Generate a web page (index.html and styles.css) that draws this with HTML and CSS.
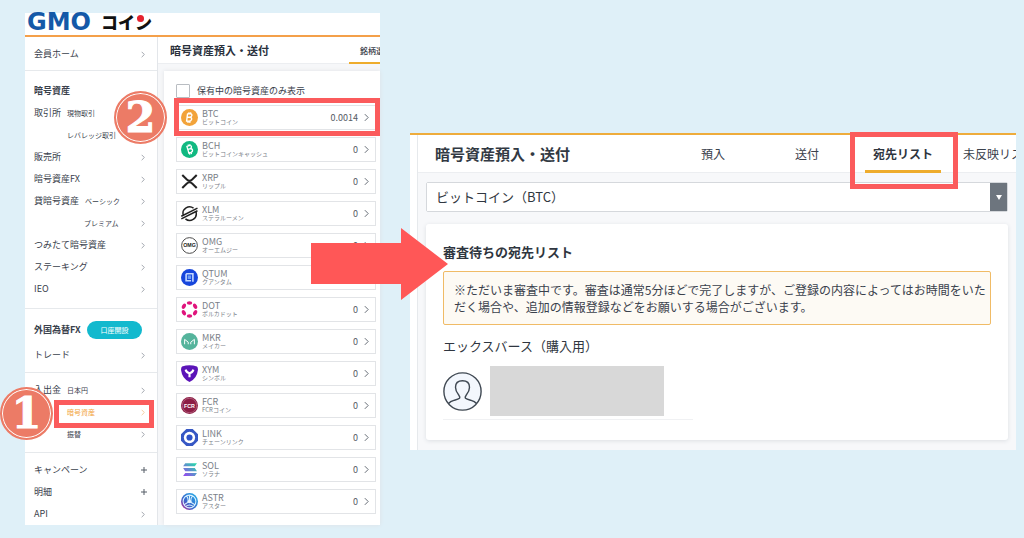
FILE: index.html
```html
<!DOCTYPE html>
<html lang="ja">
<head>
<meta charset="utf-8">
<meta name="viewport" content="width=device-width, initial-scale=1">
<title>GMOコイン 暗号資産預入・送付</title>
<link rel="stylesheet" href="styles.css">
</head>
<body>
<svg class="defs" aria-hidden="true">
  <symbol id="chev" viewBox="0 0 6 10"><path d="M1 1l4 4-4 4" fill="none" stroke="currentColor" stroke-width="1.2"/></symbol>
  <symbol id="plus" viewBox="0 0 8 8"><path d="M4 1v6M1 4h6" fill="none" stroke="currentColor" stroke-width="1"/></symbol>
</svg>
<main class="stage">
  <section class="shot">
    <header class="brand">
      <span class="brand-gmo">GMO</span><span class="brand-coin">コイン<i class="brand-dot"></i></span>
    </header>
    <div class="split">
      <nav class="side" aria-label="メニュー">
        <div class="group group-home">
          <a class="item" href="#">会員ホーム<svg class="chev"><use href="#chev"/></svg></a>
        </div>
        <div class="group group-crypto">
          <h2 class="side-title">暗号資産</h2>
          <a class="item" href="#">取引所<span class="sub">現物取引</span><svg class="chev"><use href="#chev"/></svg></a>
          <a class="item" href="#"><span class="sub indent-a">レバレッジ取引</span><svg class="chev"><use href="#chev"/></svg></a>
          <a class="item" href="#">販売所<svg class="chev"><use href="#chev"/></svg></a>
          <a class="item" href="#">暗号資産FX<svg class="chev"><use href="#chev"/></svg></a>
          <a class="item" href="#">貸暗号資産<span class="sub">ベーシック</span><svg class="chev"><use href="#chev"/></svg></a>
          <a class="item" href="#"><span class="sub indent-b">プレミアム</span><svg class="chev"><use href="#chev"/></svg></a>
          <a class="item" href="#">つみたて暗号資産<svg class="chev"><use href="#chev"/></svg></a>
          <a class="item" href="#">ステーキング<svg class="chev"><use href="#chev"/></svg></a>
          <a class="item" href="#">IEO<svg class="chev"><use href="#chev"/></svg></a>
        </div>
        <div class="group group-fx">
          <h2 class="side-title">外国為替FX<button class="open-account" type="button">口座開設</button></h2>
          <a class="item" href="#">トレード<svg class="chev"><use href="#chev"/></svg></a>
        </div>
        <div class="group group-cash">
          <a class="item" href="#">入出金<span class="sub">日本円</span><svg class="chev"><use href="#chev"/></svg></a>
          <a class="item current" href="#"><span class="sub indent-a">暗号資産</span><svg class="chev"><use href="#chev"/></svg>
            <span class="frame frame-side"></span><span class="badge badge-one">1</span></a>
          <a class="item" href="#"><span class="sub indent-a">振替</span><svg class="chev"><use href="#chev"/></svg></a>
        </div>
        <div class="group group-more">
          <a class="item" href="#">キャンペーン<svg class="plus"><use href="#plus"/></svg></a>
          <a class="item" href="#">明細<svg class="plus"><use href="#plus"/></svg></a>
          <a class="item" href="#">API<svg class="chev"><use href="#chev"/></svg></a>
        </div>
      </nav>
      <div class="content">
        <div class="content-head">
          <h1 class="content-title">暗号資産預入・送付</h1>
          <a class="pick-tab" href="#">銘柄選択</a>
        </div>
        <div class="coins-card">
          <label class="filter"><input class="filter-box" type="checkbox">保有中の暗号資産のみ表示</label>
          <ul class="coins">
            <li class="coin">
              <svg class="coin-icon" viewBox="0 0 16 16"><circle cx="8" cy="8" r="8" fill="#f2a33a"/><path d="M6.2 4.4l-.9 7M6.200 4.500h2.500q1.900.2 1.500 1.800-.3 1.500-2.200 1.500h-2M8 7.800q2.300.1 2 1.900-.4 1.700-2.600 1.700h-2.800M7.500 3v1.500M9.200 3.200l-.2 1.500M6.700 11.400l-.2 1.600M8.400 11.400l-.2 1.600" fill="none" stroke="#fff" stroke-width="1.300"/></svg>
              <span class="coin-name">BTC<small>ビットコイン</small></span><span class="coin-qty">0.0014</span><svg class="coin-chev"><use href="#chev"/></svg>
              <span class="frame frame-coin"></span><span class="badge badge-two">2</span>
            </li>
            <li class="coin">
              <svg class="coin-icon" viewBox="0 0 16 16"><circle cx="8" cy="8" r="8" fill="#11b981"/><path d="M5.500 4.900l2 6.600M5 5.200l2.800-.8q1.900-.3 2.100 1 .2 1.500-1.600 2l-1.700.5M8.300 7.400q2-.4 2.500.9.500 1.700-1.500 2.400l-2.700.8M6.600 3.300l.4 1.400M8.200 2.900l.4 1.400M7.900 11.300l.4 1.500M9.500 10.800l.4 1.500" fill="none" stroke="#fff" stroke-width="1.200"/></svg>
              <span class="coin-name">BCH<small>ビットコインキャッシュ</small></span><span class="coin-qty">0</span><svg class="coin-chev"><use href="#chev"/></svg>
            </li>
            <li class="coin">
              <svg class="coin-icon" viewBox="0 0 16 16"><path d="M1.200 1.800l4.300 4.300q2.500 2.300 5 0l4.300-4.300M1.200 14.200l4.300-4.300q2.500-2.300 5 0l4.300 4.300" fill="none" stroke="#222" stroke-width="1.900"/></svg>
              <span class="coin-name">XRP<small>リップル</small></span><span class="coin-qty">0</span><svg class="coin-chev"><use href="#chev"/></svg>
            </li>
            <li class="coin">
              <svg class="coin-icon" viewBox="0 0 16 16"><path d="M2 9.200A6.200 6.200 0 0 1 11.800 3M14.200 6.800A6.200 6.200 0 0 1 4.200 13M.3 10.600L15.500 2.900M.3 13.100L15.500 5.400" fill="none" stroke="#222" stroke-width="1.400"/></svg>
              <span class="coin-name">XLM<small>ステラルーメン</small></span><span class="coin-qty">0</span><svg class="coin-chev"><use href="#chev"/></svg>
            </li>
            <li class="coin">
              <svg class="coin-icon" viewBox="0 0 16 16"><circle cx="8" cy="8" r="7.400" fill="#fff" stroke="#444" stroke-width=".9"/><text class="icon-text" x="8" y="9.600" text-anchor="middle" fill="#222">OMG</text></svg>
              <span class="coin-name">OMG<small>オーエムジー</small></span><span class="coin-qty">0</span><svg class="coin-chev"><use href="#chev"/></svg>
            </li>
            <li class="coin">
              <svg class="coin-icon" viewBox="0 0 16 16"><circle cx="8" cy="8" r="8" fill="#1746dc"/><path d="M4.800 4.500h6.400v7.500M9.500 11H4.800V4.500" fill="none" stroke="#c4d8ff" stroke-width="1.500"/><path d="M6.300 6h3.200v3.400H6.300z" fill="#6d9df5"/></svg>
              <span class="coin-name">QTUM<small>クアンタム</small></span><span class="coin-qty">0</span><svg class="coin-chev"><use href="#chev"/></svg>
            </li>
            <li class="coin">
              <svg class="coin-icon" viewBox="0 0 16 16"><g fill="#e0147c"><ellipse cx="8" cy="1.900" rx="2.600" ry="1.700"/><ellipse cx="8" cy="14.100" rx="2.600" ry="1.700"/><ellipse cx="8" cy="1.900" rx="2.600" ry="1.700" transform="rotate(60 8 8)"/><ellipse cx="8" cy="1.900" rx="2.600" ry="1.700" transform="rotate(120 8 8)"/><ellipse cx="8" cy="1.900" rx="2.600" ry="1.700" transform="rotate(240 8 8)"/><ellipse cx="8" cy="1.900" rx="2.600" ry="1.700" transform="rotate(300 8 8)"/></g></svg>
              <span class="coin-name">DOT<small>ポルカドット</small></span><span class="coin-qty">0</span><svg class="coin-chev"><use href="#chev"/></svg>
            </li>
            <li class="coin">
              <svg class="coin-icon" viewBox="0 0 16 16"><circle cx="8" cy="8" r="8" fill="#55b49c"/><path d="M3.400 10.600V6l3.400 2.600v2M12.600 10.600V6L9.200 8.600v2" fill="none" stroke="#fff" stroke-width=".9"/></svg>
              <span class="coin-name">MKR<small>メイカー</small></span><span class="coin-qty">0</span><svg class="coin-chev"><use href="#chev"/></svg>
            </li>
            <li class="coin">
              <svg class="coin-icon" viewBox="0 0 16 16"><path d="M1 1.500Q8-1.200 15 1.500q1 1 1 3-1 8.500-8 11.500Q1 13 0 4.500q0-2 1-3z" fill="#5b14b8"/><path d="M4.300 4.300q1 3 3.700 3.400 2.700-.4 3.700-3.400M8 7.500v4" fill="none" stroke="#fff" stroke-width="2"/></svg>
              <span class="coin-name">XYM<small>シンボル</small></span><span class="coin-qty">0</span><svg class="coin-chev"><use href="#chev"/></svg>
            </li>
            <li class="coin">
              <svg class="coin-icon" viewBox="0 0 16 16"><circle cx="8" cy="8" r="8" fill="#8c1d45"/><circle cx="8" cy="8" r="6.800" fill="none" stroke="#c98ba2" stroke-width=".5"/><text class="icon-text" x="8" y="10" text-anchor="middle" fill="#fff">FCR</text></svg>
              <span class="coin-name">FCR<small>FCRコイン</small></span><span class="coin-qty">0</span><svg class="coin-chev"><use href="#chev"/></svg>
            </li>
            <li class="coin">
              <svg class="coin-icon" viewBox="0 0 16 16"><path d="M5 0h6l5 5v6l-5 5H5l-5-5V5z" fill="#3657c4"/><circle cx="8" cy="8" r="5.300" fill="#fff"/><circle cx="8" cy="8" r="2.900" fill="#2f52c8"/></svg>
              <span class="coin-name">LINK<small>チェーンリンク</small></span><span class="coin-qty">0</span><svg class="coin-chev"><use href="#chev"/></svg>
            </li>
            <li class="coin">
              <svg class="coin-icon" viewBox="0 0 16 16"><defs><linearGradient id="sol" x1="0" y1="1" x2="1" y2="0"><stop offset="0" stop-color="#9b3ff2"/><stop offset="1" stop-color="#1fe3a6"/></linearGradient></defs><path d="M4 2h11l-2 3H2zM2 6.600h11l2 3H4zM4 11.200h11l-2 3H2z" fill="url(#sol)"/></svg>
              <span class="coin-name">SOL<small>ソラナ</small></span><span class="coin-qty">0</span><svg class="coin-chev"><use href="#chev"/></svg>
            </li>
            <li class="coin">
              <svg class="coin-icon" viewBox="0 0 16 16"><defs><linearGradient id="astr" x1="0" y1="1" x2="1" y2="0"><stop offset="0" stop-color="#d0268f"/><stop offset=".4" stop-color="#3a66cc"/><stop offset="1" stop-color="#22b7ea"/></linearGradient></defs><circle cx="8" cy="8" r="8" fill="url(#astr)"/><g fill="none" stroke="#d9f1ff" stroke-width="1"><circle cx="8" cy="8" r="6"/><path d="M8 2v6l-5.200 3M8 8l5.200 3M5 3q2.500 2 1.300 6M11 3q-2.500 2-1.300 6M4.500 12.600q3.500-2.600 7 0"/></g><circle cx="8" cy="8" r="1.600" fill="#e8f6ff"/></svg>
              <span class="coin-name">ASTR<small>アスター</small></span><span class="coin-qty">0</span><svg class="coin-chev"><use href="#chev"/></svg>
            </li>
          </ul>
        </div>
      </div>
    </div>
  </section>

  <section class="shot shot-dest">
    <div class="gutter"></div>
    <div class="dest">
      <header class="dest-head">
        <h2 class="dest-title">暗号資産預入・送付</h2>
        <nav class="tabs" aria-label="預入・送付">
          <a class="tab" href="#">預入</a>
          <a class="tab" href="#">送付</a>
          <a class="tab tab-active" href="#">宛先リスト<span class="frame frame-tab"></span></a>
          <span class="tab-clip"><a class="tab-last" href="#">未反映リスト</a></span>
        </nav>
      </header>
      <div class="dest-body">
        <div class="picker">
          <select class="picker-select" aria-label="銘柄"><option>ビットコイン（BTC）</option></select>
          <span class="picker-arrow"><svg viewBox="0 0 6 5"><path d="M0 0h6L3 5z" fill="#fff"/></svg></span>
        </div>
        <div class="card">
          <h3 class="card-title">審査待ちの宛先リスト</h3>
          <p class="notice">※ただいま審査中です。審査は通常5分ほどで完了しますが、ご登録の内容によってはお時間をいただく場合や、追加の情報登録などをお願いする場合がございます。</p>
          <p class="dest-name">エックスバース（購入用）</p>
          <div class="person">
            <svg class="avatar" viewBox="0 0 39 39"><circle cx="19.500" cy="19.500" r="18.600" fill="#f3f7fd" stroke="#3f4852" stroke-width="1.400"/><path d="M5.500 31.500q1.500-2 6-3.300 4-1 5-1.900.8-1.300-.8-3.300-3.200-3.800-3.200-7.800 0-6.500 7-6.500t7 6.500q0 4-3.200 7.800-1.600 2-.8 3.300 1 .9 5 1.900 4.500 1.300 6 3.300" fill="none" stroke="#3f4852" stroke-width="1.400"/></svg>
            <div class="mask"></div>
          </div>
        </div>
      </div>
    </div>
    <svg class="arrow" viewBox="0 0 137 72" aria-hidden="true"><path d="M0 15h90V0l47 36-47 36V56H0z" fill="#ff5757"/></svg>
  </section>
</main>
</body>
</html>
```
FILE: styles.css
```css
* { box-sizing: border-box; }
body {
  margin: 0;
  background: #dff0f8;
  color: #3a414c;
  font-family: "Noto Sans CJK JP", sans-serif;
  font-size: 9px;
}
h1, h2, h3, p, ul { margin: 0; padding: 0; }
a { color: inherit; text-decoration: none; }
.defs { position: absolute; width: 0; height: 0; }

.stage {
  display: grid;
  grid-template-columns: 355fr 606fr;
  gap: 30px;
  align-items: start;
  padding: 13px 8px 13px 25px;
}
.shot { position: relative; background: #fff; min-width: 0; }

/* Brand bar */
.brand {
  display: flex;
  align-items: flex-start;
  gap: 10px;
  height: 24px;
  padding-left: 2px;
  border-bottom: 2px solid #f4a04a;
}
.brand-gmo { color: #1459a8; font: bold 24px/18px "DejaVu Sans", sans-serif; }
.brand-coin { position: relative; color: #111; font-size: 17px; font-weight: 900; line-height: 18px; }
.brand-dot {
  position: absolute; left: 36px; top: 2px;
  width: 7px; height: 7px; border-radius: 50%; background: #e6222e;
}

/* Side menu */
.split { display: flex; }
.side { flex: 0 0 133px; border-right: 1px solid #e3e6ea; }
.group { border-bottom: 1px solid #e6e9ec; padding-left: 9px; padding-right: 12px; }
.group-home { padding-top: 6px; padding-bottom: 5px; }
.group-crypto { padding-top: 8px; padding-bottom: 8px; }
.group-fx { padding-top: 9px; padding-bottom: 6px; }
.group-fx .side-title { margin-bottom: 3px; }
.group-cash { padding-top: 6px; padding-bottom: 7px; }
.group-more { padding-top: 6px; border-bottom: 0; }
.side-title { display: flex; align-items: center; justify-content: space-between; height: 23px; font-size: 9px; font-weight: 700; line-height: 12px; }
.item { position: relative; display: flex; align-items: center; height: 22px; line-height: 12px; }
.sub { margin-left: 6px; font-size: 7px; }
.indent-a { margin-left: 33px; }
.indent-b { margin-left: 50px; }
.chev { width: 4px; height: 7px; margin-left: auto; color: #8b929b; }
.plus { width: 8px; height: 8px; margin-left: auto; margin-right: -3px; color: #555c66; }
.current { color: #f2a33a; }
.current .chev { color: #f2c48a; }
.open-account {
  width: 55px; height: 18px; margin-right: 3px; padding: 0;
  border: 0; border-radius: 9px; background: #12b9ce; color: #fff;
  font: 400 7px/18px "Noto Sans CJK JP", sans-serif;
}

/* Coin list */
.content { flex: 1; min-width: 0; display: flex; flex-direction: column; background: #f6f7f9; }
.content-head {
  display: flex; justify-content: space-between;
  height: 27px; padding-left: 12px;
  background: #fff; border-bottom: 1px solid #eceef1;
}
.content-title { color: #2a313c; font-size: 11px; font-weight: 700; line-height: 27px; white-space: nowrap; }
.pick-tab {
  width: 31px; height: 27px; padding-left: 11px; overflow: hidden;
  border-bottom: 2px solid #eeac2c;
  font-size: 8px; font-weight: 500; line-height: 27px; white-space: nowrap;
}
.coins-card {
  flex: 1; margin: 7px 0 0 6px; padding: 12px 4px 10px 12px;
  background: #fff; box-shadow: 0 0 4px #dfe2e6;
}
.filter { display: flex; align-items: center; gap: 7px; height: 16px; margin-bottom: 6px; line-height: 16px; }
.filter-box {
  appearance: none; width: 14px; height: 14px; margin: 0;
  border: 1px solid #b9bdc2; border-radius: 1px; background: #fff;
}
.coins { display: grid; gap: 7px; list-style: none; }
.coin {
  position: relative; display: flex; align-items: center;
  height: 25px; padding: 0 6px 0 4px; border: 1px solid #e2e4e7;
}
.coin-icon { flex: none; width: 17px; height: 17px; margin-right: 4px; }
.icon-text { font: bold 5px "Liberation Sans", sans-serif; }
.coin-name { display: grid; color: #7a8088; font-size: 9px; line-height: 9px; }
.coin-name small { font-size: 6px; line-height: 8px; white-space: nowrap; }
.coin-qty { margin-left: auto; color: #555b64; line-height: 12px; }
.coin-chev { width: 5px; height: 9px; margin-left: 6px; color: #666d76; }

/* Callouts */
.frame { position: absolute; z-index: 2; border: 5px solid #fb5b5c; pointer-events: none; }
.frame-side { left: 20px; right: -9px; top: -1px; bottom: -5px; }
.frame-coin { left: -3px; right: -5px; top: -8px; bottom: -7px; }
.frame-tab { left: -15px; right: -17px; top: -3px; bottom: -19px; }
.badge {
  position: absolute; z-index: 3; width: 53px; height: 53px;
  border: 2px solid #ec7b66; border-radius: 50%;
  background: #ec7b66; box-shadow: inset 0 0 0 1px #fff;
  color: #fff; font: bold 43px/48px "DejaVu Serif", serif; text-align: center;
  -webkit-text-stroke: 1px #fff;
}
.badge-one { left: -34px; top: -14px; }
.badge-two { left: -63px; top: -15px; }
.arrow { position: absolute; z-index: 4; left: -99px; top: 93px; width: 137px; height: 72px; }

/* Destination list */
.shot-dest { display: flex; margin-top: 120px; border-top: 2px solid #eeac3c; }
.gutter { flex: 0 0 8px; border-right: 1px solid #e6e9ec; }
.dest { flex: 1; min-width: 0; background: #f7f8fa; }
.dest-head {
  display: flex; justify-content: space-between;
  height: 38px; padding-left: 17px; background: #fff; border-bottom: 1px solid #eceef1;
}
.dest-title { color: #323943; font-size: 15px; font-weight: 700; line-height: 38px; white-space: nowrap; }
.tabs { display: flex; font-size: 12px; line-height: 38px; white-space: nowrap; }
.tab { height: 38px; margin-right: 70px; }
.tab-active { position: relative; margin-left: -24px; margin-right: 22px; padding: 0 8px; border-bottom: 3px solid #eeac2c; color: #2f3640; font-weight: 700; }
.tab-clip { width: 53px; overflow: hidden; }
.dest-body { padding: 9px 8px 10px; }
.picker { display: flex; height: 30px; background: #fff; border: 1px solid #d5d8dc; border-radius: 2px; }
.picker-select {
  appearance: none; flex: 1; min-width: 0; padding: 0 9px; border: 0; background: #fff;
  color: #2f3640; font: 400 13px/28px "Noto Sans CJK JP", sans-serif;
}
.picker-arrow { flex: 0 0 17px; display: flex; align-items: center; justify-content: center; background: #6d757e; }
.picker-arrow svg { width: 6px; height: 5px; }
.card { margin-top: 12px; padding: 18px 17px 20px; border-radius: 3px; background: #fff; box-shadow: 0 1px 4px #dcdfe3; }
.card-title { color: #2f3640; font-size: 13px; font-weight: 700; line-height: 20px; }
.notice {
  margin-top: 9px; padding: 9px 0 9px 10px;
  border: 1px solid #f0bb66; border-radius: 2px; background: #fdfaf4;
  font-size: 12px; line-height: 17px;
}
.dest-name { margin-top: 11px; color: #2f3640; font-size: 13px; line-height: 20px; }
.person { display: flex; align-items: center; gap: 8px; width: 250px; margin-top: 10px; padding-bottom: 3px; border-bottom: 1px solid #f0f1f3; }
.avatar { flex: none; width: 39px; height: 39px; }
.mask { width: 174px; height: 50px; background: #d8d8d8; }
```
